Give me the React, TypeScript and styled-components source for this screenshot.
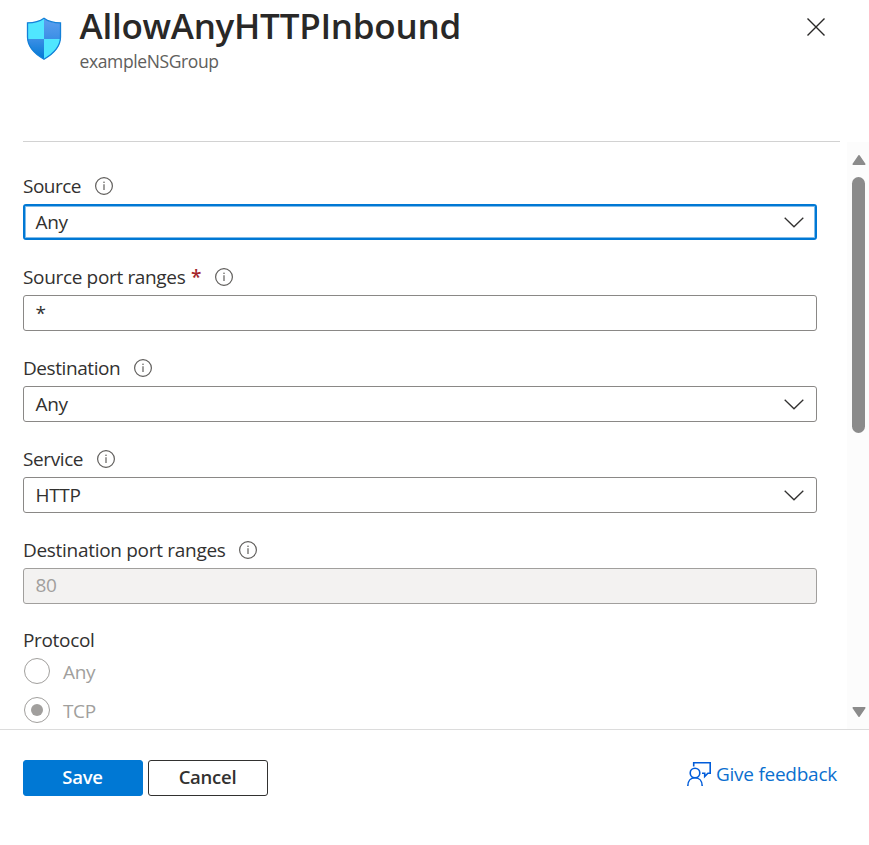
import React from "react";
import styled, { createGlobalStyle, css } from "styled-components";

const GlobalStyle = createGlobalStyle`
  *, *::before, *::after { box-sizing: border-box; }
  body { margin: 0; background: #fff; }
`;

const Blade = styled.div`
  display: flex;
  flex-direction: column;
  height: 845px;
  overflow: hidden;
  background: #fff;
  color: #323130;
  font-family: "Open Sans", "Noto Sans", sans-serif;
  font-size: 19px;
  letter-spacing: -0.34px;
`;

const Header = styled.header`
  display: flex;
  align-items: flex-start;
  height: 142px;
  margin: 0 29px 0 23px;
  border-bottom: 1px solid #d2d2d2;
`;

const ShieldIcon = styled.svg`
  width: 36px;
  height: 43px;
  margin: 17px 0 0 3px;
  flex: none;
`;

const Heading = styled.div`
  flex: 1;
  padding: 2px 0 0 17.5px;
`;

const Title = styled.h1`
  margin: 0;
  color: #292827;
  font-size: 35px;
  font-weight: 600;
  line-height: 48px;
  letter-spacing: -0.26px;
`;

const Subtitle = styled.div`
  color: #605e5c;
  font-size: 17.5px;
  line-height: 22px;
  letter-spacing: -0.38px;
`;

const CloseButton = styled.button`
  display: flex;
  margin: 18px 15px 0 0;
  padding: 0;
  border: 0;
  background: none;
`;

const Body = styled.div`
  display: flex;
  flex: none;
  height: 587px;
`;

const Form = styled.form`
  flex: 1;
  overflow: hidden;
  padding: 26px 30px 0 23px;
`;

const Field = styled.div`
  width: 794px;
  margin-bottom: 19px;
`;

const Label = styled.div<{ $tracking?: number }>`
  display: flex;
  align-items: center;
  height: 36px;
  letter-spacing: ${({ $tracking = -0.34 }) => $tracking}px;
`;

const GroupLabel = styled(Label)`
  height: 35px;
  margin: -1px 0 1px;
`;

const Required = styled.span`
  margin: 0 1px 0 5.5px;
  color: #a4262c;
  font-weight: 600;
`;

const InfoSvg = styled.svg`
  width: 18px;
  height: 18px;
  margin: 0 0 1px 13.5px;
`;

const Control = styled.div<{ $state?: "focused" | "disabled" }>`
  display: flex;
  align-items: center;
  justify-content: space-between;
  height: 36px;
  padding: 0 12px 0 11.5px;
  border: 1px solid #8a8886;
  border-radius: 3px;
  ${({ $state }) =>
    $state === "focused" &&
    css`
      padding: 0 11px 0 10.5px;
      border: 2px solid #0078d4;
      box-shadow: inset 0 0 0 1px #80bcea;
    `}
  ${({ $state }) =>
    $state === "disabled" &&
    css`
      padding-bottom: 2px;
      background: #f3f2f1;
      border-color: #a19f9d;
      color: #a19f9d;
    `}
`;

const Option = styled.label`
  display: flex;
  align-items: center;
  gap: 13px;
  height: 26px;
  margin: 0 0 13px 1px;
  color: #a19f9d;
`;

const RadioRing = styled.span<{ $selected?: boolean }>`
  display: grid;
  place-items: center;
  width: 26px;
  height: 26px;
  border: 1px solid #a19f9d;
  border-radius: 50%;

  &::after {
    content: "";
    width: 12px;
    height: 12px;
    border-radius: 50%;
    background: ${({ $selected }) => ($selected ? "#a19f9d" : "transparent")};
  }
`;

const OptionText = styled.span`
  padding-top: 2px;
`;

const Scrollbar = styled.div`
  display: flex;
  flex-direction: column;
  align-items: center;
  width: 22px;
  padding: 12px 0 11px 1px;
  background: #fcfcfc;
`;

const ScrollArrow = styled.svg`
  width: 14px;
  height: 12px;
  flex: none;
`;

const Thumb = styled.div`
  width: 13px;
  height: 256px;
  margin: 11px 0 auto;
  border-radius: 7px;
  background: #8b8b8b;
`;

const Footer = styled.footer`
  display: flex;
  align-items: flex-start;
  gap: 5px;
  flex: 1;
  padding: 30px 32px 0 23px;
  border-top: 1px solid #dcdcdc;
`;

const Button = styled.button<{ $primary?: boolean }>`
  width: 120px;
  height: 36px;
  padding: 0 1px 3px 0;
  border: 1px solid ${({ $primary }) => ($primary ? "#0078d4" : "#323130")};
  border-radius: 3px;
  background: ${({ $primary }) => ($primary ? "#0078d4" : "#fff")};
  color: ${({ $primary }) => ($primary ? "#fff" : "#323130")};
  font-family: inherit;
  font-size: 18.5px;
  font-weight: 600;
  letter-spacing: -0.25px;
`;

const Feedback = styled.a`
  display: flex;
  align-items: center;
  gap: 5px;
  height: 28px;
  margin-left: auto;
  color: #0b6fcf;
  letter-spacing: -0.25px;
`;

const Info = () => (
  <InfoSvg viewBox="0 0 18 18" fill="none">
    <circle cx="9" cy="9" r="8.4" stroke="#605e5c" strokeWidth="1.2" />
    <path d="M9 7.3V13" stroke="#605e5c" strokeWidth="1.2" />
    <circle cx="9" cy="5.2" r=".8" fill="#605e5c" />
  </InfoSvg>
);

const Chevron = () => (
  <svg width="20" height="12" viewBox="0 0 20 12" fill="none">
    <path d="M.7 1.7 10 10.8l9.3-9.1" stroke="#323130" strokeWidth="1.3" />
  </svg>
);

type FieldProps = {
  label: string;
  value: string;
  tracking?: number;
  required?: boolean;
  dropdown?: boolean;
  state?: "focused" | "disabled";
};

const FormField = ({ label, value, tracking, required, dropdown, state }: FieldProps) => (
  <Field>
    <Label $tracking={tracking}>
      {label}
      {required && <Required>*</Required>}
      <Info />
    </Label>
    <Control $state={state}>
      <span>{value}</span>
      {dropdown && <Chevron />}
    </Control>
  </Field>
);

const shield =
  "M18 1.2c5 3.7 9.3 4.6 16.5 4.6V20c0 10.5-7.2 16.8-16.5 22.2C8.7 36.8 1.5 30.5 1.5 20V5.8C8.7 5.8 13 4.900 18 1.2Z";

export default function App() {
  return (
    <>
      <GlobalStyle />
      <Blade>
        <Header>
          <ShieldIcon viewBox="0 0 36 43">
            <defs>
              <linearGradient id="shade" x1="0" y1="0" x2="0" y2="1">
                <stop offset="0" stopColor="#5ea0ef" />
                <stop offset=".5" stopColor="#3c8fe6" />
                <stop offset="1" stopColor="#0078d4" />
              </linearGradient>
              <clipPath id="outline"><path d={shield} /></clipPath>
            </defs>
            <path d={shield} fill="url(#shade)" />
            <g clipPath="url(#outline)" fill="#50e6ff">
              <path d="M0 0h18v22H0zM18 22h18v21H18z" />
            </g>
            <path d={shield} fill="none" stroke="#1480d8" strokeWidth="1.3" />
          </ShieldIcon>
          <Heading>
            <Title>AllowAnyHTTPInbound</Title>
            <Subtitle>exampleNSGroup</Subtitle>
          </Heading>
          <CloseButton aria-label="Close">
            <svg width="18" height="18" viewBox="0 0 18 18">
              <path d="m.5.5 17 17M17.5.5l-17 17" stroke="#292827" strokeWidth="1.4" />
            </svg>
          </CloseButton>
        </Header>
        <Body>
          <Form>
            <FormField label="Source" value="Any" tracking={-0.5} dropdown state="focused" />
            <FormField label="Source port ranges" value="*" required />
            <FormField label="Destination" value="Any" tracking={-0.42} dropdown />
            <FormField label="Service" value="HTTP" tracking={-0.4} dropdown />
            <FormField label="Destination port ranges" value="80" tracking={-0.3} state="disabled" />
            <GroupLabel>Protocol</GroupLabel>
            <Option><RadioRing /><OptionText>Any</OptionText></Option>
            <Option><RadioRing $selected /><OptionText>TCP</OptionText></Option>
          </Form>
          <Scrollbar>
            <ScrollArrow viewBox="0 0 14 12">
              <path d="M7 1.8 12.8 10.2H1.2Z" fill="#8b8b8b" stroke="#8b8b8b" strokeWidth="1.5" strokeLinejoin="round" />
            </ScrollArrow>
            <Thumb />
            <ScrollArrow viewBox="0 0 14 12">
              <path d="M7 10.2 1.2 1.8h11.6Z" fill="#8b8b8b" stroke="#8b8b8b" strokeWidth="1.5" strokeLinejoin="round" />
            </ScrollArrow>
          </Scrollbar>
        </Body>
        <Footer>
          <Button $primary>Save</Button>
          <Button>Cancel</Button>
          <Feedback>
            <svg width="24" height="24" viewBox="0 0 24 24" fill="none" stroke="#015cda" strokeWidth="1.6">
              <circle cx="8" cy="11" r="4.8" />
              <path d="M.8 24c0-5 3-8.2 7.2-8.2s7.2 3.2 7.2 8.2M6.7 4.5V.8h16.5v10.5h-2.3l-3.2 3.2v-3.2H15" />
            </svg>
            Give feedback
          </Feedback>
        </Footer>
      </Blade>
    </>
  );
}
